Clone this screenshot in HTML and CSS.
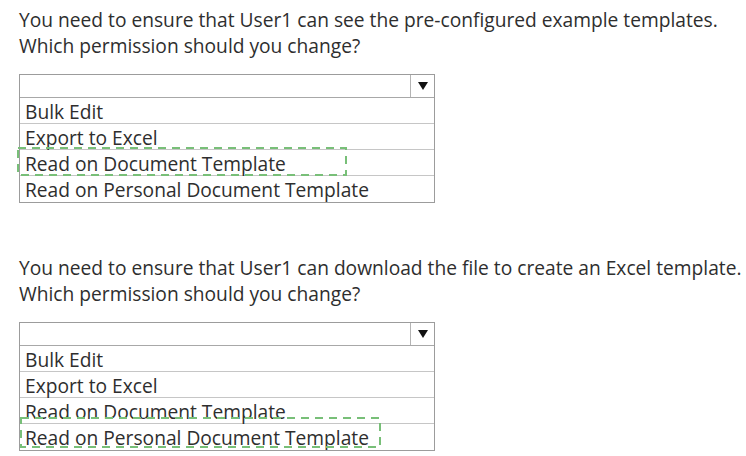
FILE: index.html
```html
<!DOCTYPE html>
<html lang="en">
<head>
    <meta charset="UTF-8">
    <meta name="viewport" content="width=device-width, initial-scale=1.0">
    <title>Permissions</title>
    <link rel="stylesheet" href="styles.css">
</head>
<body>
    <div class="question">
        <p class="prompt">You need to ensure that User1 can see the pre-configured example templates.<br>Which permission should you change?</p>
        <div class="dropdown">
            <div class="select">
                <span class="value"></span>
                <span class="arrow">
                    <svg width="10" height="8" viewBox="0 0 10 8"><polygon points="0,0 10,0 5,8" fill="#111"/></svg>
                </span>
            </div>
            <ul class="options">
                <li>Bulk Edit</li>
                <li>Export to Excel</li>
                <li>Read on Document Template
                    <svg class="mark mark-first" width="330" height="29"><rect x="1" y="1" width="328" height="27" fill="none" stroke="#78bf78" stroke-width="2" stroke-dasharray="8 6"/></svg>
                </li>
                <li>Read on Personal Document Template</li>
            </ul>
        </div>
    </div>

    <div class="question second">
        <p class="prompt">You need to ensure that User1 can download the file to create an Excel template.<br>Which permission should you change?</p>
        <div class="dropdown">
            <div class="select">
                <span class="value"></span>
                <span class="arrow">
                    <svg width="10" height="8" viewBox="0 0 10 8"><polygon points="0,0 10,0 5,8" fill="#111"/></svg>
                </span>
            </div>
            <ul class="options">
                <li>Bulk Edit</li>
                <li>Export to Excel</li>
                <li>Read on Document Template</li>
                <li>Read on Personal Document Template
                    <svg class="mark mark-second" width="361" height="31"><rect x="1" y="1" width="359" height="29" fill="none" stroke="#78bf78" stroke-width="2" stroke-dasharray="8 6"/></svg>
                </li>
            </ul>
        </div>
    </div>
</body>
</html>
```

FILE: styles.css
```css
body {
    margin: 0;
    padding: 7px 0 0 19px;
    font-family: 'Open Sans', sans-serif;
    font-size: 19.2px;
    color: #2e2e2e;
    background-color: #fff;
}

.question.second {
    margin-top: 52px;
}

.prompt {
    margin: 0;
    line-height: 26px;
}

.dropdown {
    width: 416px;
    margin-top: 15px;
    border: 1px solid #9c9c9c;
    box-sizing: border-box;
}

.select {
    display: flex;
    height: 22px;
    border-bottom: 1px solid #a8a8a8;
}

.select .value {
    flex: 1;
}

.select .arrow {
    width: 23px;
    border-left: 1px solid #b4b4b4;
    display: flex;
    align-items: center;
    justify-content: center;
}

.options {
    list-style: none;
    margin: 0;
    padding: 0;
}

.options li {
    position: relative;
    height: 25px;
    line-height: 27px;
    padding-left: 5px;
    border-bottom: 1px solid #c6c6c6;
    white-space: nowrap;
}

.options li:last-child {
    height: 26px;
    border-bottom: none;
}

.mark {
    position: absolute;
    display: block;
}

.mark-first {
    left: -3px;
    top: -3px;
}

.mark-second {
    left: 0;
    top: -7px;
}
```
